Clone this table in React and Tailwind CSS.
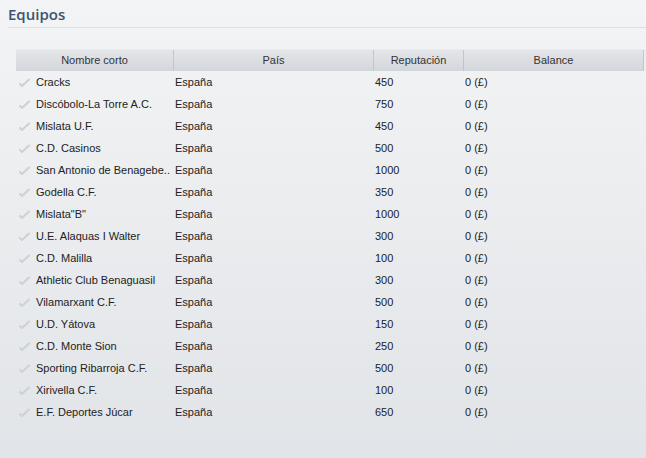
import React from 'react';

const teams = [
  ["Cracks", "450"],
  ["Discóbolo-La Torre A.C.", "750"],
  ["Mislata U.F.", "450"],
  ["C.D. Casinos", "500"],
  ["San Antonio de Benagebe..", "1000"],
  ["Godella C.F.", "350"],
  ["Mislata\"B\"", "1000"],
  ["U.E. Alaquas I Walter", "300"],
  ["C.D. Malilla", "100"],
  ["Athletic Club Benaguasil", "300"],
  ["Vilamarxant C.F.", "500"],
  ["U.D. Yátova", "150"],
  ["C.D. Monte Sion", "250"],
  ["Sporting Ribarroja C.F.", "500"],
  ["Xirivella C.F.", "100"],
  ["E.F. Deportes Júcar", "650"],
];

const Check = () => (
  <svg width="11" height="9" viewBox="0 0 11 9" className="shrink-0">
    <path d="M1 6 L3 8 L10 1.5" fill="none" stroke="#cdd1d5" strokeWidth="2" strokeLinecap="round" strokeLinejoin="round" />
  </svg>
);

const App = () => {
  return (
    <div
      className="w-[646px] h-[458px] overflow-hidden bg-gradient-to-b from-[#f3f4f5] to-[#e1e4e8] text-[11px] text-[#222]"
      style={{ fontFamily: '"Liberation Sans", Arial, sans-serif' }}
    >
      <div className="pl-2 pt-[5px]">
        <h1 className="text-[15px] leading-[18px] text-[#3c5371] pb-[4px] border-b border-[#dcdfe3]" style={{ fontFamily: '"Open Sans", sans-serif', fontWeight: 600 }}>
          Equipos
        </h1>
      </div>

      <div className="ml-4 mt-[21px] w-[630px]">
        <div className="flex h-[22px] bg-gradient-to-b from-[#e4e6e9] to-[#d3d6da] border-t border-[#e9ebee] text-[#333] leading-[20px]">
          <div className="w-[158px] text-center border-r border-[#c2c6cb]">Nombre corto</div>
          <div className="w-[200px] text-center border-r border-[#c2c6cb]">País</div>
          <div className="w-[90px] text-center border-r border-[#c2c6cb]">Reputación</div>
          <div className="flex-1 text-center">Balance</div>
          <div className="w-[3px] border-l border-[#c2c6cb] bg-[#eceef0]" />
        </div>

        {teams.map(([name, rep]) => (
          <div key={name} className="flex h-[22px] items-center">
            <div className="w-[158px] flex items-center gap-[6px] pl-[3px] whitespace-nowrap">
              <Check />
              <span>{name}</span>
            </div>
            <div className="w-[200px] pl-[1px]">España</div>
            <div className="w-[90px] pl-[1px]">{rep}</div>
            <div className="flex-1 pl-[1px]">0 (£)</div>
          </div>
        ))}
      </div>
    </div>
  );
};

export default App;
